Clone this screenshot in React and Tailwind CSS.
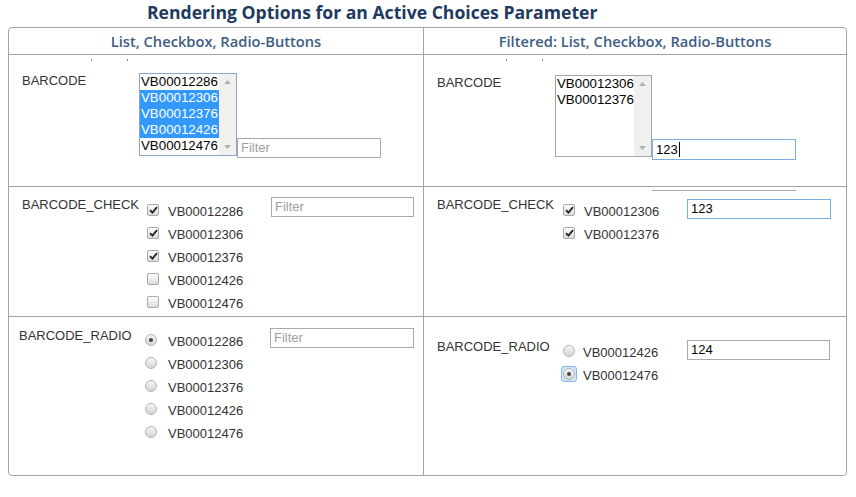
import React from 'react';

const left = ['VB00012286', 'VB00012306', 'VB00012376', 'VB00012426', 'VB00012476'];

const Checkbox = ({ checked }) => (
  <span className="w-[12px] h-[12px] mt-[-3px] border border-[#a8a8a8] rounded-[2px] bg-gradient-to-b from-[#fdfdfd] to-[#dcdcdc] flex items-center justify-center shrink-0">
    {checked && (
      <svg width="9" height="8" viewBox="0 0 9 8">
        <path d="M1 4.2 L3.4 6.6 L8 1.2" fill="none" stroke="#222" strokeWidth="1.8" />
      </svg>
    )}
  </span>
);

const Radio = ({ checked, focused }) => (
  <span
    className={
      focused
        ? 'w-[16px] h-[16px] ml-[-2px] mr-[-2px] mt-[-3px] rounded-[3px] bg-[#cfe3fa] border border-[#8db7e8] flex items-center justify-center shrink-0'
        : 'w-[12px] h-[12px] mt-[-3px] flex items-center justify-center shrink-0'
    }
  >
    <span className="w-[12px] h-[12px] rounded-full border border-[#b4b4b4] bg-gradient-to-b from-[#f6f6f6] to-[#d4d4d4] flex items-center justify-center">
      {checked && <span className="w-[4px] h-[4px] rounded-full bg-[#444]" />}
    </span>
  </span>
);

const ListBox = ({ items, selected = [], width, height, borderClass }) => (
  <div className={`flex bg-white border ${borderClass} shrink-0`} style={{ width, height }}>
    <div className="flex-1 flex flex-col text-[13.3px] leading-[16px] text-black whitespace-nowrap">
      {items.map((v, i) => (
        <div
          key={v}
          className={selected.includes(i) ? 'pl-[1px] bg-[#3399ff] text-white' : 'pl-[1px]'}
        >
          {v}
        </div>
      ))}
    </div>
    <div className="w-[17px] bg-[#f0f0f0] flex flex-col items-center justify-between py-[6px]">
      <svg width="7" height="4" viewBox="0 0 7 4">
        <path d="M0 4 L3.5 0 L7 4 Z" fill="#b0b0b0" />
      </svg>
      <svg width="7" height="4" viewBox="0 0 7 4">
        <path d="M0 0 L3.5 4 L7 0 Z" fill="#b0b0b0" />
      </svg>
    </div>
  </div>
);

const TextBox = ({ value, placeholder, focused, cursor, width = 144, height = 20 }) => (
  <div
    className={
      focused
        ? 'border border-[#7eaee0] bg-white pl-[3px] flex items-center text-[13px] text-black shrink-0'
        : 'border border-[#a9a9a9] bg-white pl-[3px] flex items-center text-[13px] text-black shrink-0'
    }
    style={{ width, height }}
  >
    {value ? (
      <span className="flex items-center">
        {value}
        {cursor && <span className="w-[1px] h-[15px] bg-black ml-[1px]" />}
      </span>
    ) : (
      <span className="text-[#a0a0a0]">{placeholder}</span>
    )}
  </div>
);

const Item = ({ children, label, gap = 'ml-[9px]' }) => (
  <div className="h-[23px] flex items-center">
    {children}
    <span className={`${gap} text-[13px] leading-[16px] text-[#333] mt-[1px]`}>{label}</span>
  </div>
);

const Dots = ({ offset }) => (
  <div className="h-[6px] pt-[4px] flex">
    <span className="w-[1px] h-[2px] bg-[#888]" style={{ marginLeft: offset }} />
    <span className="w-[1px] h-[2px] bg-[#888] ml-[35px]" />
  </div>
);

export default function App() {
  return (
    <div className="w-[856px] h-[497px] bg-white font-['Liberation_Sans',Arial,sans-serif] text-[13px] text-[#333]">
      <h1 className="h-[27px] pl-[147px] leading-[25px] text-[17.6px] font-bold text-[#1e3a5f] font-['Open_Sans',sans-serif]">
        Rendering Options for an Active Choices Parameter
      </h1>

      <div className="ml-[8px] w-[839px] border border-[#a3a3a3] rounded-[4px] grid grid-cols-[415px_1fr] grid-rows-[27px_132px_130px_158px]">
        {/* header */}
        <div className="border-r border-b border-[#a3a3a3] flex items-center justify-center font-['Open_Sans',sans-serif] font-semibold text-[14.7px] text-[#3d5d84]">
          List, Checkbox, Radio-Buttons
        </div>
        <div className="border-b border-[#a3a3a3] flex items-center justify-center font-['Open_Sans',sans-serif] font-semibold text-[14.7px] text-[#3d5d84]">
          Filtered: List, Checkbox, Radio-Buttons
        </div>

        {/* BARCODE list */}
        <div className="border-r border-b border-[#a3a3a3]">
          <Dots offset={82} />
          <div className="flex pl-[13px] pt-[12px]">
            <span className="w-[117px] leading-[16px]">BARCODE</span>
            <ListBox items={left} selected={[1, 2, 3]} width={98} height={83} borderClass="border-[#8ea6c6]" />
            <div className="mt-[65px]">
              <TextBox placeholder="Filter" />
            </div>
          </div>
        </div>
        <div className="border-b border-[#a3a3a3]">
          <Dots offset={82} />
          <div className="flex pl-[13px] pt-[14px]">
            <span className="w-[118px] leading-[16px]">BARCODE</span>
            <ListBox items={['VB00012306', 'VB00012376']} width={97} height={82} borderClass="border-[#a6a6a6]" />
            <div className="mt-[64px]">
              <TextBox value="123" focused cursor height={21} />
            </div>
          </div>
        </div>

        {/* BARCODE_CHECK */}
        <div className="border-r border-b border-[#a3a3a3] flex pl-[13px] pt-[10px]">
          <span className="w-[125px] leading-[16px]">BARCODE_CHECK</span>
          <div className="w-[124px] mt-[3px]">
            {left.map((v, i) => (
              <Item key={v} label={v}>
                <Checkbox checked={i < 3} />
              </Item>
            ))}
          </div>
          <TextBox placeholder="Filter" width={143} />
        </div>
        <div className="border-b border-[#a3a3a3]">
          <div className="h-[4px] w-[144px] ml-[228px] border-b border-[#a9a9a9]" />
          <div className="flex pl-[13px] pt-[6px]">
            <span className="w-[126px] leading-[16px]">BARCODE_CHECK</span>
            <div className="w-[124px] mt-[3px]">
              <Item label="VB00012306">
                <Checkbox checked />
              </Item>
              <Item label="VB00012376">
                <Checkbox checked />
              </Item>
            </div>
            <div className="mt-[2px]">
              <TextBox value="123" focused />
            </div>
          </div>
        </div>

        {/* BARCODE_RADIO */}
        <div className="border-r border-[#a3a3a3] flex pl-[10px] pt-[11px]">
          <span className="w-[126px] leading-[16px]">BARCODE_RADIO</span>
          <div className="w-[125px] mt-[2px]">
            {left.map((v, i) => (
              <Item key={v} label={v} gap="ml-[11px]">
                <Radio checked={i === 0} />
              </Item>
            ))}
          </div>
          <TextBox placeholder="Filter" />
        </div>
        <div className="flex pl-[13px] pt-[23px]">
          <span className="w-[126px] leading-[16px] mt-[-1px]">BARCODE_RADIO</span>
          <div className="w-[124px] mt-[1px]">
            <Item label="VB00012426" gap="ml-[8px]">
              <Radio />
            </Item>
            <Item label="VB00012476" gap="ml-[8px]">
              <Radio checked focused />
            </Item>
          </div>
          <TextBox value="124" width={143} />
        </div>
      </div>
    </div>
  );
}
